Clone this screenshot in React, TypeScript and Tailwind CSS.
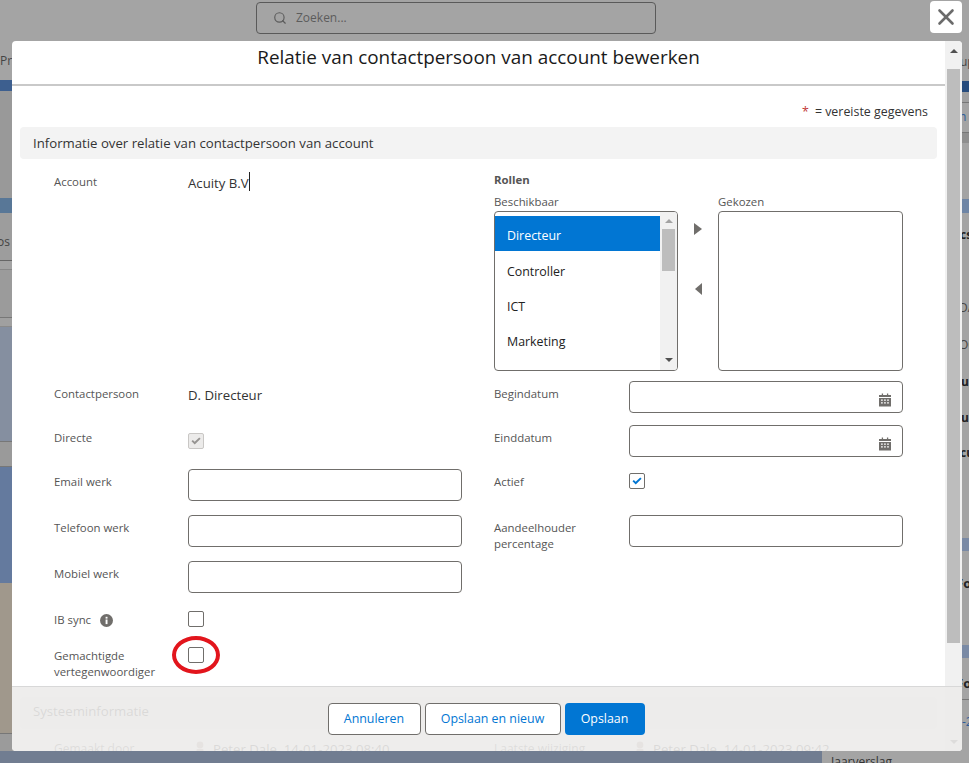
import React from 'react';
import { Search, X } from 'lucide-react';

// Small check used by the checkboxes, same shape for active and disabled state
const CheckMark: React.FC<{ className: string }> = ({ className }) => (
  <svg viewBox="0 0 12 12" className={className} fill="currentColor">
    <path d="M0.6 6.4 2.2 4.8 4.4 6.8 9.9 1.8 11.5 3.4 4.5 10.2z" />
  </svg>
);

const CalendarIcon: React.FC = () => (
  <svg viewBox="0 0 13 14" className="h-[14px] w-3 text-[#706e6b]" fill="currentColor">
    <path d="M3 0h1.4v1.6H8.6V0H10v1.6h3v2.2H0V1.6h3zM0 4.8h13V14H0zM2.2 6.4v1.5h1.9V6.4zm3.3 0v1.5h1.9V6.4zm3.3 0v1.5h1.9V6.4zM2.2 9.4v1.5h1.9V9.4zm3.3 0v1.5h1.9V9.4zm3.3 0v1.5h1.9V9.4z" fillRule="evenodd" />
  </svg>
);

const InfoIcon: React.FC = () => (
  <svg viewBox="0 0 13 13" className="h-[13px] w-[13px] text-[#706e6b]">
    <circle cx="6.5" cy="6.5" r="6.5" fill="currentColor" />
    <rect x="5.6" y="5.5" width="1.9" height="4.6" fill="#fff" />
    <rect x="5.6" y="2.8" width="1.9" height="1.8" fill="#fff" />
  </svg>
);

const Avatar: React.FC = () => (
  <svg viewBox="0 0 10 16" className="h-4 w-[10px] text-[#a89a92]" fill="currentColor">
    <circle cx="5" cy="4" r="3.4" />
    <rect x="1.5" y="8" width="7" height="8" rx="1" />
  </svg>
);

const Label: React.FC<{ children: React.ReactNode; narrow?: boolean }> = ({ children, narrow }) => (
  <div
    className={
      narrow
        ? 'w-[134px] shrink-0 pt-[5px] text-[11.4px] leading-4 text-[#555]'
        : 'w-[135px] shrink-0 pt-[5px] text-[11.4px] leading-4 text-[#555]'
    }
  >
    {children}
  </div>
);

const TextBox: React.FC<{ icon?: boolean }> = ({ icon }) => (
  <div className="flex h-8 w-[274px] items-center justify-end rounded border border-[#706e6b] bg-white pr-[11px] pt-[5px]">
    {icon && <CalendarIcon />}
  </div>
);

const CheckBox: React.FC<{ state?: 'on' | 'off' | 'disabled' }> = ({ state = 'off' }) => (
  <div
    className={
      state === 'disabled'
        ? 'flex h-4 w-4 items-center justify-center rounded-[2px] border border-[#c9c7c5] bg-[#ecebea]'
        : 'flex h-4 w-4 items-center justify-center rounded-[2px] border border-[#706e6b] bg-white'
    }
  >
    {state === 'on' && <CheckMark className="h-[10px] w-[10px] text-[#0176d3]" />}
    {state === 'disabled' && <CheckMark className="h-[10px] w-[10px] text-[#969492]" />}
  </div>
);

const roles = ['Controller', 'ICT', 'Marketing'];

const App: React.FC = () => {
  return (
    <div className="relative h-[763px] w-[969px] overflow-hidden bg-[#a4a4a4] text-[13px] [font-family:'Open_Sans',sans-serif]">
      {/* Page behind the dialog */}
      <div className="flex h-[41px] pl-[256px] pt-[2px]">
        <div className="flex h-8 w-[400px] items-center rounded border border-[#5a5a5a] pl-[16px] text-[12px] text-[#5c5c5c]">
          <Search size={14} strokeWidth={2} className="mr-[9px] text-[#5c5c5c]" />
          Zoeken...
        </div>
      </div>
      <div className="flex h-[710px] justify-between">
        <div className="flex w-3 flex-col overflow-hidden text-[12px] text-[#444]">
          <div className="h-[39px] shrink-0 bg-[#a4a4a4] pt-[12px] leading-4">Pr</div>
          <div className="h-[11px] shrink-0 bg-[#3d5f8f]" />
          <div className="h-[107px] shrink-0 bg-[#999]" />
          <div className="h-[15px] shrink-0 bg-[#587797]" />
          <div className="h-[48px] shrink-0 border-b border-[#666] bg-[#9d9d9d] pt-[21px] leading-4 [text-indent:-3px]">os</div>
          <div className="h-[9px] shrink-0 border-b border-[#888] bg-[#a3a3a3]" />
          <div className="h-[48px] shrink-0 border-b border-[#777] bg-[#9b9b9b]" />
          <div className="h-[9px] shrink-0 border-b border-[#8a8a8a] bg-[#a0a0a0]" />
          <div className="h-[115px] shrink-0 border-b border-[#777] bg-[#858fa0]" />
          <div className="h-[25px] shrink-0 border-b border-[#777] bg-[#9a9a9a]" />
          <div className="h-[116px] shrink-0 bg-[#647a9e]" />
          <div className="h-[150px] shrink-0 bg-[#a0988c]" />
          <div className="h-[18px] shrink-0 border-t border-[#777] bg-[#9b9b9b]" />
        </div>
        <div className="flex w-[7px] flex-col overflow-hidden whitespace-nowrap text-[12px] font-bold text-[#222]">
          <div className="h-[40px] shrink-0 pt-[13px] font-normal leading-4 text-[#444] [text-indent:-2px]">up</div>
          <div className="h-[11px] shrink-0 bg-[#274c7d]" />
          <div className="h-[11px] shrink-0 border-b border-[#777] bg-[#a0a0a0]" />
          <div className="h-[30px] shrink-0 border-b border-[#777] pt-[6px] font-normal leading-4 text-[#2a5a9a] [text-indent:-3px]">n</div>
          <div className="h-[10px] shrink-0 bg-[#8f8f8f]" />
          <div className="h-[56px] shrink-0" />
          <div className="h-[14px] shrink-0 bg-[#6e85a5]" />
          <div className="h-[14px] shrink-0" />
          <div className="h-4 shrink-0 leading-4 [text-indent:-2px]">cs</div>
          <div className="h-[57px] shrink-0" />
          <div className="h-[37px] shrink-0 font-normal leading-4 text-[#444] [text-indent:-3px]">DA</div>
          <div className="h-[37px] shrink-0 font-normal leading-4 text-[#444] [text-indent:-3px]">OC</div>
          <div className="h-[36px] shrink-0 leading-4 [text-indent:-1px]">u</div>
          <div className="h-[35px] shrink-0 leading-4 [text-indent:-1px]">u</div>
          <div className="h-[93px] shrink-0 leading-4 [text-indent:-2px]">cu</div>
          <div className="h-[13px] shrink-0 bg-[#7a8aa5]" />
          <div className="h-[94px] shrink-0 pt-[24px] text-[13px] leading-4 [text-indent:-6px]">Fo</div>
          <div className="h-[13px] shrink-0 bg-[#7a8aa5]" />
          <div className="h-[42px] shrink-0 border-b border-[#777] pt-[17px] text-[13px] leading-4 [text-indent:-6px]">Fo</div>
          <div className="pt-[14px] font-normal leading-4 text-[#2a5a9a]">-2</div>
        </div>
      </div>
      <div className="flex h-3 justify-between bg-[#717d91]">
        <div />
        <div className="w-[147px] overflow-hidden bg-[#a4a4a4] pl-[9px] pt-[3px] text-[12px] leading-4 text-[#333]">Jaarverslag</div>
      </div>

      {/* Close button */}
      <div className="absolute left-[930px] top-[1px] flex h-8 w-8 items-center justify-center rounded bg-white">
        <X size={26} strokeWidth={2.4} className="text-[#6b6b6b]" />
      </div>

      {/* Dialog */}
      <div className="absolute left-3 top-[41px] flex h-[710px] w-[950px] overflow-hidden rounded-[4px] bg-white">
        <div className="flex w-[933px] flex-col">
          <div className="flex h-[45px] shrink-0 justify-center border-b-2 border-[#c9c9c9] pt-[2px] text-[18.9px] leading-7 text-[#1a1a1a]">
            Relatie van contactpersoon van account bewerken
          </div>
          <div className="mt-[18px] flex justify-end pr-[17px] text-[12.4px] leading-4 text-[#333]">
            <span className="mr-[6px] text-[#c23934]">*</span>= vereiste gegevens
          </div>
          <div className="mx-2 mt-[7px] flex h-8 shrink-0 items-center rounded bg-[#f3f3f3] pl-[13px] pt-[1px] text-[13.2px] text-[#333]">
            Informatie over relatie van contactpersoon van account
          </div>

          <div className="mt-[13px] flex pl-[42px]">
            {/* Left column */}
            <div className="w-[440px] shrink-0">
              <div className="flex h-[209px]">
                <div className="-mt-[3px] flex">
                  <Label narrow>Account</Label>
                  <div className="relative h-fit pt-1 text-[13.2px] leading-5 text-[#333]">
                    Acuity B.V
                    <span className="absolute -right-[1px] top-[3px] h-[19px] w-px bg-[#222]" />
                  </div>
                </div>
              </div>
              <div className="flex h-[44px]">
                <Label narrow>Contactpersoon</Label>
                <div className="pt-1 text-[13.2px] leading-5 text-[#333]">D. Directeur</div>
              </div>
              <div className="flex h-[44px]">
                <Label narrow>Directe</Label>
                <div className="pt-2"><CheckBox state="disabled" /></div>
              </div>
              <div className="flex h-[46px]">
                <Label narrow>Email werk</Label>
                <TextBox />
              </div>
              <div className="flex h-[46px]">
                <Label narrow>Telefoon werk</Label>
                <TextBox />
              </div>
              <div className="flex h-[46px]">
                <Label narrow>Mobiel werk</Label>
                <TextBox />
              </div>
              <div className="flex h-[36px]">
                <Label narrow>
                  <span className="flex items-center">
                    IB sync
                    <span className="ml-[9px] mt-[1px]"><InfoIcon /></span>
                  </span>
                </Label>
                <div className="pt-1"><CheckBox /></div>
              </div>
              <div className="flex h-[52px]">
                <Label narrow>Gemachtigde<br />vertegenwoordiger</Label>
                <div className="relative h-fit pt-1">
                  <CheckBox />
                  <div className="absolute -left-[16px] -top-[7px] h-[38px] w-[48px] rounded-[50%] border-4 border-[#e2151c]" />
                </div>
              </div>
            </div>

            {/* Right column */}
            <div className="w-[410px] shrink-0">
              <div className="h-[209px]">
                <div className="text-[11.4px] font-bold leading-4 text-[#555]">Rollen</div>
                <div className="mt-[6px] flex">
                  <div className="w-[184px]">
                    <div className="text-[11.4px] leading-4 text-[#555]">Beschikbaar</div>
                    <div className="mt-[1px] flex h-[160px] overflow-hidden rounded border border-[#706e6b]">
                      <div className="flex-1 pt-1">
                        <div className="flex h-[35px] items-center bg-[#0176d3] pl-3 pt-[6px] text-[12.4px] text-white">Directeur</div>
                        {roles.map((role) => (
                          <div key={role} className="flex h-[35px] items-center pl-3 pt-2 text-[12.4px] text-[#222]">{role}</div>
                        ))}
                      </div>
                      <div className="flex w-[17px] flex-col items-center bg-[#f1f1f1]">
                        <div className="mt-[7px] h-0 w-0 border-x-[4px] border-b-[4px] border-x-transparent border-b-[#a3a3a3]" />
                        <div className="mt-[6px] h-[42px] w-[13px] bg-[#bdbdbd]" />
                        <div className="mt-auto mb-[8px] h-0 w-0 border-x-[4px] border-t-[4px] border-x-transparent border-t-[#505050]" />
                      </div>
                    </div>
                  </div>
                  <div className="flex w-10 flex-col items-center pt-[29px]">
                    <div className="ml-[-1px] h-0 w-0 border-y-[6px] border-l-[8px] border-y-transparent border-l-[#706e6b]" />
                    <div className="mt-[48px] h-0 w-0 border-y-[6px] border-r-[7px] border-y-transparent border-r-[#706e6b]" />
                  </div>
                  <div className="w-[185px]">
                    <div className="text-[11.4px] leading-4 text-[#555]">Gekozen</div>
                    <div className="mt-[1px] h-[160px] rounded border border-[#706e6b]" />
                  </div>
                </div>
              </div>
              <div className="flex h-[44px]">
                <Label>Begindatum</Label>
                <TextBox icon />
              </div>
              <div className="flex h-[44px]">
                <Label>Einddatum</Label>
                <TextBox icon />
              </div>
              <div className="flex h-[46px]">
                <Label>Actief</Label>
                <div className="pt-1"><CheckBox state="on" /></div>
              </div>
              <div className="flex h-[46px]">
                <Label>Aandeelhouder<br />percentage</Label>
                <TextBox />
              </div>
            </div>
          </div>

          {/* Next section, mostly hidden by the footer */}
          <div className="mx-2 mt-[2px] flex h-8 shrink-0 items-center rounded bg-[#f3f3f3] pb-[2px] pl-[13px] text-[13.2px] text-[#333]">
            Systeeminformatie
          </div>
          <div className="mt-3 flex pl-[42px] text-[12px] leading-4 text-[#555]">
            <div className="flex w-[440px] shrink-0 items-center">
              <span className="w-[141px]">Gemaakt door</span>
              <Avatar />
              <span className="ml-2 text-[13.2px] text-[#333]">Peter Dale, 14-01-2023 08:40</span>
            </div>
            <div className="flex items-center">
              <span className="w-[141px]">Laatste wijziging</span>
              <Avatar />
              <span className="ml-2 text-[13.2px] text-[#333]">Peter Dale, 14-01-2023 09:42</span>
            </div>
          </div>
        </div>

        {/* Dialog scrollbar */}
        <div className="flex w-[17px] shrink-0 flex-col items-center bg-[#f1f1f1]">
          <div className="mt-[8px] h-0 w-0 border-x-[4px] border-b-[4px] border-x-transparent border-b-[#505050]" />
          <div className="mt-[16px] h-[574px] w-[13px] bg-[#bdbdbd]" />
          <div className="mt-auto mb-[7px] h-0 w-0 border-x-[4px] border-t-[4px] border-x-transparent border-t-[#505050]" />
        </div>

        {/* Sticky footer, content shows faintly through */}
        <div className="absolute inset-x-0 bottom-0 flex h-[65px] justify-center gap-1 border-t border-[#d8d8d8] bg-[#ecebea]/90 pr-[2px] pt-4 text-[12.4px]">
          <div className="flex h-8 w-[93px] items-center justify-center rounded border border-[#706e6b] bg-white text-[#0176d3]">Annuleren</div>
          <div className="flex h-8 w-[136px] items-center justify-center rounded border border-[#706e6b] bg-white text-[#0176d3]">Opslaan en nieuw</div>
          <div className="flex h-8 w-20 items-center justify-center rounded bg-[#0176d3] text-white">Opslaan</div>
        </div>
      </div>
    </div>
  );
};

export default App;
